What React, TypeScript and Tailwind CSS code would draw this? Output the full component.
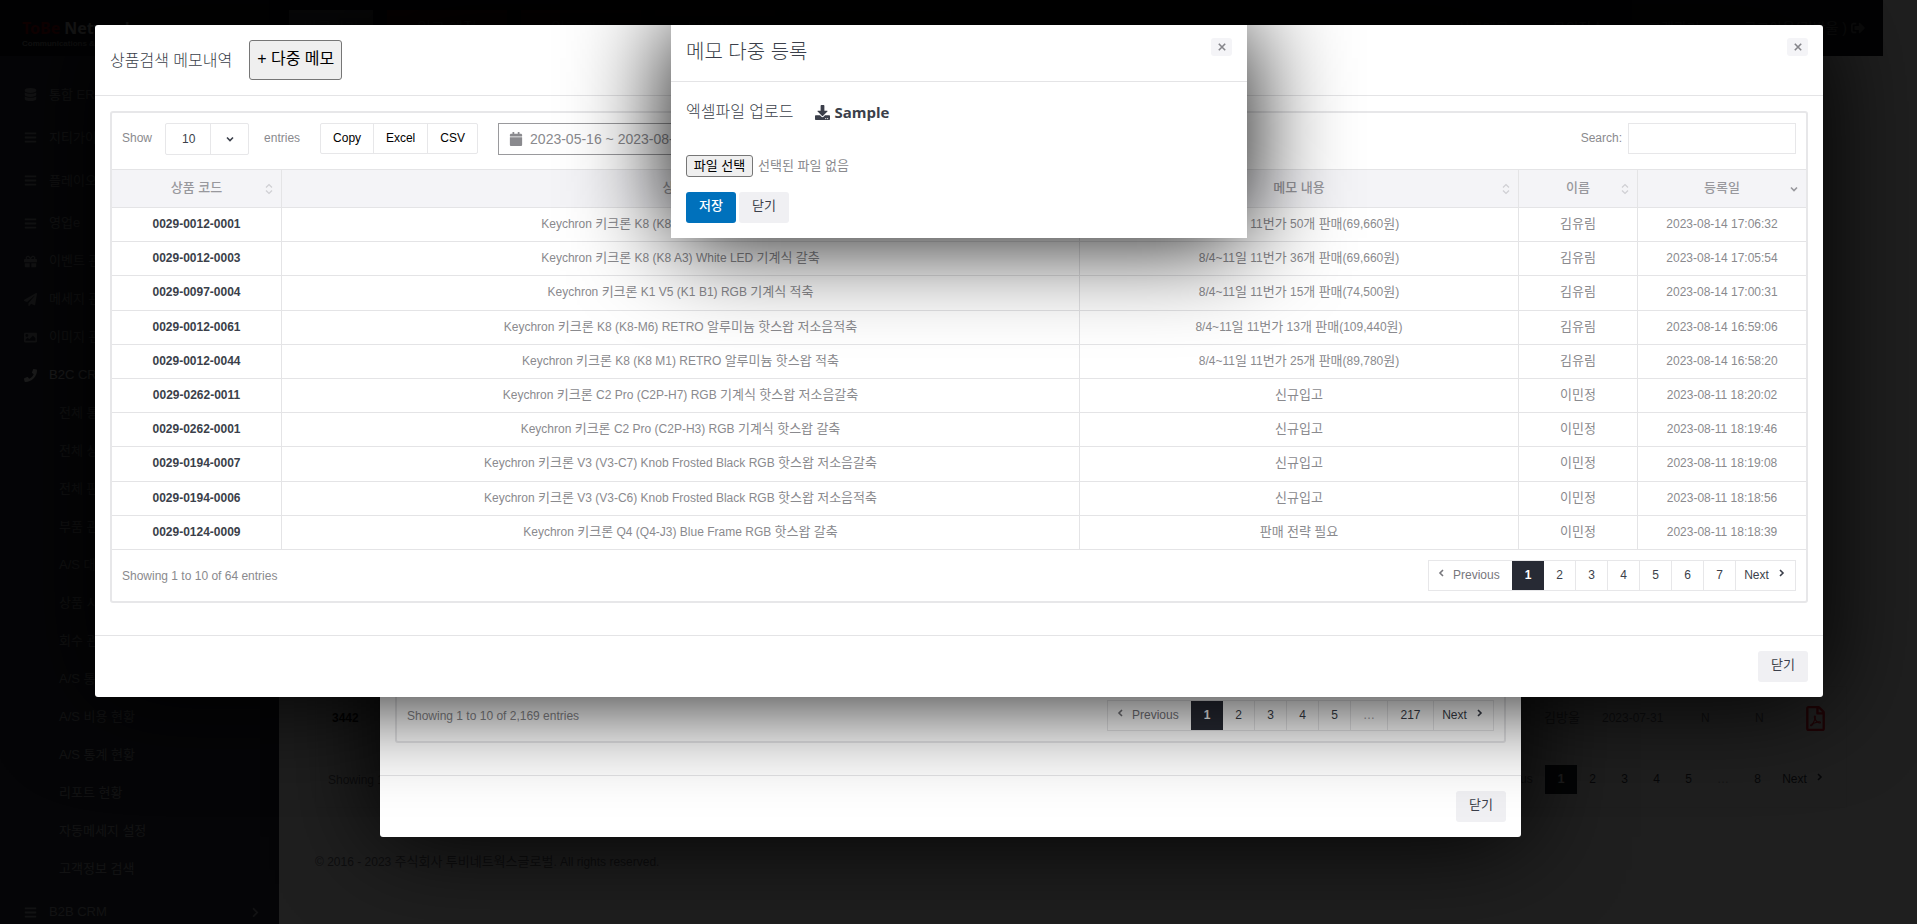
import { Fragment, type ReactNode } from "react";
import {
  FaBars,
  FaCalendar,
  FaChevronRight,
  FaDatabase,
  FaDownload,
  FaGift,
  FaImage,
  FaPaperPlane,
  FaPhone,
  FaRegFilePdf,
  FaSignOutAlt,
} from "react-icons/fa";

const memos = [
  ["0029-0012-0001", "Keychron 키크론 K8 (K8 A1) White LED 기계식 적축", "8/4~11일 11번가 50개 판매(69,660원)", "김유림", "2023-08-14 17:06:32"],
  ["0029-0012-0003", "Keychron 키크론 K8 (K8 A3) White LED 기계식 갈축", "8/4~11일 11번가 36개 판매(69,660원)", "김유림", "2023-08-14 17:05:54"],
  ["0029-0097-0004", "Keychron 키크론 K1 V5 (K1 B1) RGB 기계식 적축", "8/4~11일 11번가 15개 판매(74,500원)", "김유림", "2023-08-14 17:00:31"],
  ["0029-0012-0061", "Keychron 키크론 K8 (K8-M6) RETRO 알루미늄 핫스왑 저소음적축", "8/4~11일 11번가 13개 판매(109,440원)", "김유림", "2023-08-14 16:59:06"],
  ["0029-0012-0044", "Keychron 키크론 K8 (K8 M1) RETRO 알루미늄 핫스왑 적축", "8/4~11일 11번가 25개 판매(89,780원)", "김유림", "2023-08-14 16:58:20"],
  ["0029-0262-0011", "Keychron 키크론 C2 Pro (C2P-H7) RGB 기계식 핫스왑 저소음갈축", "신규입고", "이민정", "2023-08-11 18:20:02"],
  ["0029-0262-0001", "Keychron 키크론 C2 Pro (C2P-H3) RGB 기계식 핫스왑 갈축", "신규입고", "이민정", "2023-08-11 18:19:46"],
  ["0029-0194-0007", "Keychron 키크론 V3 (V3-C7) Knob Frosted Black RGB 핫스왑 저소음갈축", "신규입고", "이민정", "2023-08-11 18:19:08"],
  ["0029-0194-0006", "Keychron 키크론 V3 (V3-C6) Knob Frosted Black RGB 핫스왑 저소음적축", "신규입고", "이민정", "2023-08-11 18:18:56"],
  ["0029-0124-0009", "Keychron 키크론 Q4 (Q4-J3) Blue Frame RGB 핫스왑 갈축", "판매 전략 필요", "이민정", "2023-08-11 18:18:39"],
];

const columns = ["상품 코드", "상품명", "메모 내용", "이름", "등록일"];

const mainMenu = [
  { label: "통합 ERP", icon: <FaDatabase /> },
  { label: "지티가이드", icon: <FaBars /> },
  { label: "플레이오토", icon: <FaBars /> },
];

const crmMenu = [
  { label: "영업e", icon: <FaBars /> },
  { label: "이벤트 관리", icon: <FaGift /> },
  { label: "메세지 관리", icon: <FaPaperPlane /> },
  { label: "이미지 관리", icon: <FaImage /> },
  { label: "B2C CRM", icon: <FaPhone />, active: true },
];

const subMenu = [
  "전체 통계",
  "전체 상담",
  "전체 판매",
  "부품 관리",
  "A/S 대기",
  "상품 시리얼",
  "회수 관리",
  "A/S 통합",
  "A/S 비용 현황",
  "A/S 통계 현황",
  "리포트 현황",
  "자동메세지 설정",
  "고객정보 검색",
];

/* Hangul runs are set one step larger than the Latin text around them. */
function Mixed({ text }: { text: string }) {
  return (
    <>
      {text.split(/([가-힣]+)/).map((part, i) =>
        i % 2 ? (
          <span key={i} className="text-[13px]">
            {part}
          </span>
        ) : (
          <Fragment key={i}>{part}</Fragment>
        ),
      )}
    </>
  );
}

function Chevron({ dir, className = "" }: { dir: "left" | "right" | "down"; className?: string }) {
  const d = dir === "left" ? "M7 2 4 5l3 3" : dir === "right" ? "M3 2l3 3-3 3" : "M2 3.5l3 3 3-3";
  return (
    <svg viewBox="0 0 10 10" className={`size-[10px] ${className}`} fill="none" stroke="currentColor" aria-hidden="true">
      <path d={d} strokeWidth="1.6" />
    </svg>
  );
}

function SortIcon() {
  return (
    <svg viewBox="0 0 8 12" className="h-[12px] w-[8px] text-[#cfcfd3]" fill="none" stroke="currentColor" aria-hidden="true">
      <path d="M1 4.5 4 1.5l3 3M1 7.5l3 3 3-3" strokeWidth="1.2" />
    </svg>
  );
}

function CloseButton() {
  return (
    <button
      type="button"
      aria-label="닫기"
      className="mt-[13px] flex h-[18px] w-[21px] shrink-0 items-center justify-center self-start rounded-[3px] bg-[#f4f4f7] text-[#85858a]"
    >
      <svg viewBox="0 0 8 8" className="size-[8px]" fill="none" stroke="currentColor" aria-hidden="true">
        <path d="M.8.8l6.4 6.4M7.2.8.8 7.2" strokeWidth="1.6" />
      </svg>
    </button>
  );
}

function Pagination({ pages, faded = false }: { pages: string[]; faded?: boolean }) {
  const line = faded ? "border-transparent" : "border-[#e7e7e9]";
  return (
    <nav aria-label="페이지" className={`flex h-[31px] border text-[12px] text-[#3b3f4a] ${line}`}>
      <button type="button" className="flex w-[83px] items-center gap-[7px] pb-[2px] pl-[7px] text-[#77777c]">
        <Chevron dir="left" className="mb-[3px]" />
        Previous
      </button>
      {pages.map((p, i) => (
        <button
          key={i}
          type="button"
          className={
            i === 0
              ? "w-[32px] bg-[#272a34] pb-[2px] font-bold text-white"
              : p === "…"
                ? `w-[37px] border-r pb-[2px] text-[#a0a0a5] ${line}`
                : p.length > 1
                  ? `w-[46px] border-r pb-[2px] ${line}`
                  : `w-[32px] border-r pb-[2px] ${line}`
          }
        >
          {p}
        </button>
      ))}
      <button type="button" className="flex w-[59px] items-center justify-center gap-[8px] pb-[2px]">
        Next
        <Chevron dir="right" className="mb-[3px]" />
      </button>
    </nav>
  );
}

function CloseFooter() {
  return (
    <footer className="flex justify-end border-t border-[#e4e4e6] p-[15px]">
      <button type="button" className="h-[31px] w-[50px] rounded-[3px] bg-[#f0f0f3] pb-[3px] text-[13px] text-[#3b3f4a]">
        닫기
      </button>
    </footer>
  );
}

function MenuRow({ icon, children, className = "" }: { icon: ReactNode; children: ReactNode; className?: string }) {
  return (
    <a href="#" className={`flex items-center gap-[12px] px-[24px] whitespace-nowrap ${className}`}>
      <span className="flex w-[13px] justify-center">{icon}</span>
      {children}
    </a>
  );
}

function Dashboard() {
  return (
    <div className="flex min-h-screen flex-col bg-[#fbfbfc] pr-[34px] text-[12px]">
      <header className="flex h-[56px] shrink-0 items-center gap-[14px] bg-[#14151c] pr-[18px]">
        <div className="w-[275px] pt-[12px] pl-[22px]">
          <div className="flex gap-[4px] font-['Noto_Sans',sans-serif] text-[16px] leading-[20px] font-bold">
            <span className="text-[#78000f]">ToBe</span>
            <span className="text-[#b8b8b8]">Networks</span>
          </div>
          <div className="text-[8px] leading-[12px] font-bold text-[#808080]">Communications &amp; Global</div>
        </div>
        <div className="flex flex-1 items-center gap-[14px] text-[15px] text-[#7a7a7a]">
          <span className="flex h-[36px] w-[84px] items-center justify-center bg-[#5c5c62]">바로가기</span>
          <span className="flex h-[36px] w-[120px] items-center justify-center bg-[#500010]">입고 예정</span>
          <span className="flex h-[36px] w-[120px] items-center justify-center bg-[#500010]">입고 관리</span>
          <span className="flex h-[36px] w-[120px] items-center justify-center bg-[#3c000c]">미처리건</span>
          <span className="h-[36px] w-[162px] border border-[#33343c]" />
        </div>
        <div className="flex items-center gap-[44px] text-[14px] text-[#5a5a5e]">
          <span>신규메모</span>
          <span>문의접수</span>
          <span>고객관리</span>
          <span className="flex items-center gap-[4px]">
            로그아웃(김방울 ) <FaSignOutAlt />
          </span>
        </div>
      </header>
      <div className="flex flex-1">
        <aside className="flex w-[279px] shrink-0 flex-col bg-[#2a2d38] pt-[17px] text-[13px] text-[#93949a]">
          {mainMenu.map((m) => (
            <MenuRow key={m.label} icon={m.icon} className="h-[43px]">
              {m.label}
            </MenuRow>
          ))}
          <div className="flex flex-col py-[2px]">
            {crmMenu.map((m) => (
              <MenuRow key={m.label} icon={m.icon} className={m.active ? "h-[38px] text-[#e0e0e4]" : "h-[38px]"}>
                {m.label}
              </MenuRow>
            ))}
            {subMenu.map((m) => (
              <a key={m} href="#" className="flex h-[38px] items-center pl-[59px]">
                {m}
              </a>
            ))}
          </div>
          <div className="flex h-[44px] items-center justify-between pr-[18px]">
            <MenuRow icon={<FaBars />}>B2B CRM</MenuRow>
            <FaChevronRight className="text-[11px]" />
          </div>
        </aside>
        <main className="flex flex-1 flex-col justify-end px-[36px] pb-[62px] text-[#77777c]">
          <section className="border border-[#f4f4f5]">
            <div className="flex h-[62px] items-center px-[16px]">
              <b className="flex-1 text-[#111]">3442</b>
              <span className="w-[58px] text-[13px]">김방울</span>
              <span className="w-[99px]">2023-07-31</span>
              <span className="w-[54px]">N</span>
              <span className="w-[48px]">N</span>
              <FaRegFilePdf className="mr-[2px] text-[25px] text-[#f01828]" />
            </div>
            <div className="flex items-center justify-between px-[12px] pt-[15px] pb-[12px]">
              <span>Showing 1 to 10 of 80 entries</span>
              <Pagination pages={["1", "2", "3", "4", "5", "…", "8"]} faded />
            </div>
          </section>
          <p className="mt-[44px] text-[12px] leading-[20px]">
            <Mixed text="© 2016 - 2023 주식회사 투비네트웍스글로벌. All rights reserved." />
          </p>
        </main>
      </div>
    </div>
  );
}

function SearchDialog() {
  return (
    <section className="flex h-[812px] w-[1141px] flex-col justify-end rounded-[3px] bg-white shadow-[0_0_100px_#000]">
      <div className="mx-[15px] mb-[32px] rounded-[3px] border-2 border-[#e7e7e9] p-[10px]">
        <div className="flex items-center justify-between">
          <span className="text-[12px] text-[#8a8a8e]">Showing 1 to 10 of 2,169 entries</span>
          <Pagination pages={["1", "2", "3", "4", "5", "…", "217"]} />
        </div>
      </div>
      <CloseFooter />
    </section>
  );
}

function MemoDialog() {
  return (
    <section className="w-full rounded-[3px] bg-white shadow-[0_0_100px_#000]">
      <header className="flex h-[71px] items-center border-b border-[#e4e4e6] px-[15px]">
        <h2 className="pt-[2px] text-[16px] font-light text-[#3b3f4a]">상품검색 메모내역</h2>
        <button
          type="button"
          className="mr-auto ml-[17px] h-[40px] w-[93px] rounded-[3px] border border-[#767676] bg-[#efefef] pb-[2px] text-[16px] whitespace-nowrap text-black"
        >
          + 다중 메모
        </button>
        <CloseButton />
      </header>
      <div className="px-[15px] pt-[15px] pb-[32px]">
        <div className="rounded-[3px] border-2 border-[#e7e7e9]">
          <div className="flex h-[56px] items-start px-[10px] pt-[10px] text-[12px] text-[#8a8a8e]">
            <label htmlFor="page-size" className="mr-[13px] leading-[30px]">
              Show
            </label>
            <div className="grid h-[32px] w-[84px] grid-cols-[44px_38px] items-center rounded-[2px] border border-[#e7e7e9]">
              <select
                id="page-size"
                defaultValue="10"
                className="col-span-2 col-start-1 row-start-1 h-full appearance-none bg-transparent pl-[16px] text-[12px] text-[#3b3f4a]"
              >
                <option>10</option>
                <option>25</option>
                <option>50</option>
              </select>
              <span className="pointer-events-none col-start-2 row-start-1 flex h-full items-center justify-center border-l border-[#e7e7e9] text-[#3b3f4a]">
                <Chevron dir="down" />
              </span>
            </div>
            <span className="ml-[15px] leading-[30px]">entries</span>
            <div className="ml-[20px] flex h-[31px] rounded-[2px] border border-[#e7e7e9] text-black">
              <button type="button" className="w-[53px] border-r border-[#e7e7e9] pb-[2px]">
                Copy
              </button>
              <button type="button" className="w-[54px] border-r border-[#e7e7e9] pb-[2px]">
                Excel
              </button>
              <button type="button" className="w-[49px] pb-[2px]">
                CSV
              </button>
            </div>
            <div className="ml-[20px] flex h-[32px] w-[216px] items-center gap-[7px] border border-[#9a9a9d] px-[10px] text-[14px]">
              <FaCalendar className="shrink-0 text-[14px]" />
              <input
                aria-label="기간"
                defaultValue="2023-05-16 ~ 2023-08-14"
                className="min-w-0 flex-1 bg-transparent text-[14px] outline-none"
              />
            </div>
            <label htmlFor="search" className="ml-auto leading-[30px]">
              Search:
            </label>
            <input id="search" type="text" className="ml-[6px] h-[31px] w-[168px] border border-[#e7e7e9] px-[8px] outline-none" />
          </div>
          <table className="h-[381px] w-full table-fixed border-separate border-spacing-0 text-center text-[12px] text-[#8a8a8e]">
            <colgroup>
              <col className="w-[170px]" />
              <col />
              <col className="w-[439px]" />
              <col className="w-[119px]" />
              <col className="w-[168px]" />
            </colgroup>
            <thead>
              <tr className="h-[39px] bg-[#f4f4f7] text-[#98989d]">
                {columns.map((c, i) => (
                  <th
                    key={c}
                    scope="col"
                    className={`border-y border-[#e4e4e6] text-[13px] font-medium ${i < 4 ? "border-r" : ""}`}
                  >
                    <div className="grid grid-cols-[24px_1fr_24px] items-center">
                      <span className="col-start-2 pb-[2px]">{c}</span>
                      <span className="flex justify-center">{i < 4 ? <SortIcon /> : <Chevron dir="down" />}</span>
                    </div>
                  </th>
                ))}
              </tr>
            </thead>
            <tbody>
              {memos.map((row) => (
                <tr key={row[0]} className="h-[34px]">
                  {row.map((cell, i) => (
                    <td
                      key={i}
                      className={`border-b border-[#e4e4e6] pb-[1px] leading-[18px] ${i < 4 ? "border-r" : ""} ${i === 0 ? "font-bold text-[#3b3f4a]" : ""}`}
                    >
                      <Mixed text={cell} />
                    </td>
                  ))}
                </tr>
              ))}
            </tbody>
          </table>
          <div className="flex items-center justify-between p-[10px]">
            <span className="text-[12px] text-[#8a8a8e]">Showing 1 to 10 of 64 entries</span>
            <Pagination pages={["1", "2", "3", "4", "5", "6", "7"]} />
          </div>
        </div>
      </div>
      <CloseFooter />
    </section>
  );
}

function UploadDialog() {
  return (
    <section className="w-[576px] bg-white shadow-[0_0_100px_#000]">
      <header className="flex h-[57px] items-center justify-between border-b border-[#e4e4e6] px-[15px]">
        <h2 className="pb-[3px] text-[20px] font-light text-[#3b3f4a]">메모 다중 등록</h2>
        <CloseButton />
      </header>
      <div className="p-[15px]">
        <div className="flex h-[30px] items-center text-[16px] text-[#3b3f4a]">
          <span className="font-light">엑셀파일 업로드</span>
          <a href="#" className="ml-[21px] flex items-center gap-[5px] font-['Open_Sans',sans-serif] text-[15px] font-bold">
            <FaDownload className="text-[15px]" />
            Sample
          </a>
        </div>
        <label className="mt-[28px] flex h-[22px] items-center gap-[5px] text-[13px] text-[#8a8a8e]">
          <input type="file" className="sr-only" />
          <span className="flex h-[22px] w-[67px] items-center justify-center rounded-[3px] border border-[#767676] bg-[#efefef] text-black">
            파일 선택
          </span>
          <span>선택된 파일 없음</span>
        </label>
        <div className="mt-[15px] flex gap-[3px] text-[13px]">
          <button type="button" className="h-[31px] w-[50px] rounded-[3px] bg-[#0071bc] pb-[3px] font-medium text-white">
            저장
          </button>
          <button type="button" className="h-[31px] w-[50px] rounded-[3px] bg-[#f0f0f3] pb-[3px] text-[#3b3f4a]">
            닫기
          </button>
        </div>
      </div>
    </section>
  );
}

export default function App() {
  return (
    <div className="relative h-screen overflow-hidden bg-white font-['Liberation_Sans','Noto_Sans_CJK_KR',sans-serif]">
      <Dashboard />
      <div className="absolute inset-0 bg-black/88" />
      <div className="absolute inset-0 flex items-start justify-center pt-[25px] pr-[16px]">
        <SearchDialog />
      </div>
      <div className="absolute inset-0 flex items-start pt-[25px] pr-[94px] pl-[95px]">
        <MemoDialog />
      </div>
      <div className="absolute inset-0 flex items-start justify-center pt-[25px] pl-[1px]">
        <UploadDialog />
      </div>
    </div>
  );
}
